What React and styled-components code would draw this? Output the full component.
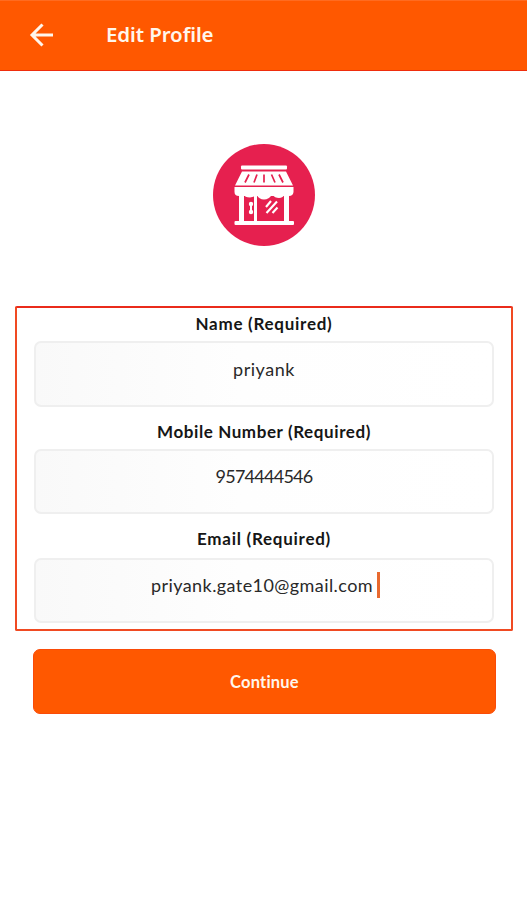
import styled, { createGlobalStyle } from "styled-components";

const fields = [
  { label: "Name (Required)", value: "priyank", width: 137, valueWidth: 62, height: 66, gap: 7 },
  { label: "Mobile Number (Required)", value: "9574444546", width: 214, valueWidth: 97, height: 65, gap: 7 },
  { label: "Email (Required)", value: "priyank.gate10@gmail.com", width: 134, valueWidth: 222, height: 65, gap: 9, focused: true },
];

export default function App() {
  return (
    <>
      <GlobalStyle />
      <Screen>
        <Header>
          <BackButton aria-label="Back">
            <BackArrow />
          </BackButton>
          <Title>Edit Profile</Title>
        </Header>
        <Avatar>
          <StoreIcon />
        </Avatar>
        <Form>
          {fields.map((field) => (
            <Field key={field.label}>
              <Label $gap={field.gap}>
                <FittedText text={field.label} width={field.width} />
              </Label>
              <ValueBox $height={field.height} $focused={field.focused}>
                <FittedText text={field.value} width={field.valueWidth} />
                {field.focused && <Caret />}
              </ValueBox>
            </Field>
          ))}
        </Form>
        <ContinueButton>Continue</ContinueButton>
      </Screen>
    </>
  );
}

// keeps the text at a fixed width by spreading its letters
function FittedText({ text, width }) {
  const fit = (node) => {
    if (!node) return;
    node.style.letterSpacing = "0px";
    const natural = node.getBoundingClientRect().width;
    node.style.letterSpacing = `${(width - natural) / text.length}px`;
  };
  return <span ref={fit}>{text}</span>;
}

function BackArrow() {
  return (
    <svg width="24" height="24" viewBox="0 0 24 24" fill="none" stroke="#fff6ec" strokeWidth="3">
      <path d="M24 12H3M13.5 1.5L3 12L13.5 22.5" />
    </svg>
  );
}

function StoreIcon() {
  return (
    <svg width="102" height="102" viewBox="0 0 102 102">
      <g fill="#fff">
        <rect x="28" y="21.5" width="46" height="4" rx="1" />
        <path d="M29 27.5H73L80 41.5H22Z" />
        <path d="M21.5 43H80.5V48Q80 52 76 52H26Q21.5 52 21.5 48Z" />
        <path d="M30 50H72Q70 54 66 54Q62 54 59 50.5Q56 55.5 51 55.5Q46 55.5 43.5 50.5Q41 53.5 37 53.5Q32 53.5 30 50Z" />
        <rect x="26" y="50" width="5" height="28" />
        <rect x="71" y="50" width="5" height="28" />
        <rect x="41" y="50" width="3" height="28" />
        <rect x="21.5" y="77" width="59.5" height="4" rx="1" />
      </g>
      <path d="M36 30.5L32 38.5M44 30.5L41 38.5M51 30.5V38.5M58.5 30.5L62 38.5M66 30.5L70 38.5" stroke="#e6204f" strokeWidth="1.7" />
      <path d="M38 59V69" stroke="#fff" strokeWidth="2" />
      <circle cx="38" cy="60" r="2.2" fill="#fff" />
      <circle cx="38" cy="68" r="2.2" fill="#fff" />
      <path d="M53 63L58 57M53.5 69L64 57.5M59.5 69L64.5 63.5" stroke="#fff" strokeWidth="2.1" />
    </svg>
  );
}

const GlobalStyle = createGlobalStyle`
  * {
    box-sizing: border-box;
  }

  body {
    margin: 0;
    background: #fff;
    font-family: Lato, "Noto Sans", sans-serif;
  }
`;

const Screen = styled.main`
  display: flex;
  flex-direction: column;
  width: 527px;
  height: 900px;
  overflow: hidden;
  background: #fff;
`;

const Header = styled.header`
  display: flex;
  align-items: center;
  height: 71px;
  padding-left: 29px;
  background: #ff5800;
  border-top: 1px solid #ff6b20;
  border-bottom: 1px solid #ef2d0c;
`;

const BackButton = styled.button`
  display: flex;
  padding: 0 0 2px;
  border: 0;
  background: none;
`;

const Title = styled.h1`
  margin: 0 0 0 53px;
  padding-bottom: 3px;
  color: #fff6ec;
  font-family: "Noto Sans", sans-serif;
  font-size: 20.5px;
  font-weight: 600;
  letter-spacing: -0.1px;
  line-height: 28px;
`;

const Avatar = styled.div`
  display: flex;
  align-self: center;
  width: 102px;
  height: 102px;
  margin-top: 73px;
  border-radius: 50%;
  background: #e6204f;
`;

const Form = styled.section`
  display: flex;
  flex-direction: column;
  gap: 15px;
  width: 498px;
  height: 325px;
  margin: 60px 0 0 15px;
  padding: 6px 17px 0;
  border: 2px solid #f04a22;
  border-top-color: #ea2b1b;
  border-radius: 2px;
`;

const Field = styled.div`
  display: flex;
  flex-direction: column;
`;

const Label = styled.div`
  margin-bottom: ${({ $gap }) => $gap}px;
  color: #161616;
  font-size: 17px;
  font-weight: 700;
  line-height: 20px;
  text-align: center;
  white-space: nowrap;
`;

const ValueBox = styled.div`
  display: flex;
  align-items: center;
  justify-content: center;
  height: ${({ $height }) => $height}px;
  padding: 0 0 11px ${({ $focused }) => ($focused ? "3px" : "0")};
  border: 2px solid #efefef;
  border-radius: 7px;
  background: linear-gradient(90deg, #f9f9f9, #fefefe 45%, #fff);
  color: #292929;
  font-size: 18px;
  line-height: 26px;
  white-space: nowrap;
`;

const Caret = styled.span`
  width: 3px;
  height: 26px;
  margin-left: 4px;
  background: #e8692f;
`;

const ContinueButton = styled.button`
  width: 463px;
  height: 65px;
  margin: 18px 0 0 33px;
  padding: 0;
  border: 1px solid #fa4b08;
  border-radius: 7px;
  background: #ff5800;
  color: #fff6ec;
  font-family: Lato, sans-serif;
  font-size: 16.5px;
  font-weight: 700;
  letter-spacing: 0.2px;
`;
